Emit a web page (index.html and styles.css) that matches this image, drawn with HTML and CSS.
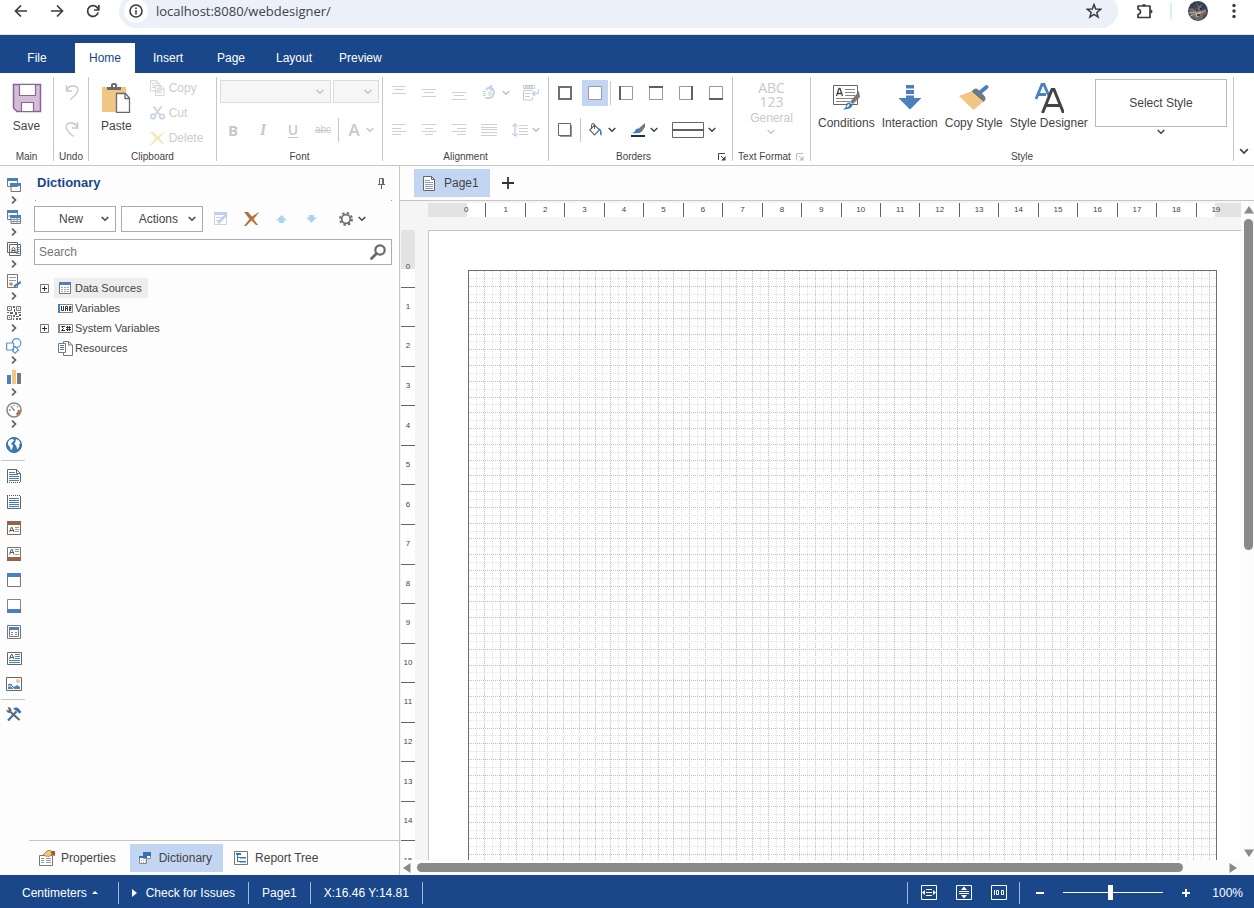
FILE: index.html
```html
<!DOCTYPE html>
<html lang="en">
<head>
<meta charset="utf-8">
<meta name="viewport" content="width=device-width, initial-scale=1">
<title>Report Designer</title>
<link rel="stylesheet" href="styles.css">
</head>
<body>
<svg class="defs" aria-hidden="true">
  <symbol id="down" viewBox="0 0 8 6"><path d="M.7 1 4 4.3 7.3 1" fill="none" stroke="currentColor" stroke-width="1.5"/></symbol>
  <symbol id="right" viewBox="0 0 6 8"><path d="M1 .7 4.5 4 1 7.3" fill="none" stroke="currentColor" stroke-width="1.6"/></symbol>
  <symbol id="launch" viewBox="0 0 8 8"><path d="M.5 7V.5H7M3 3l3 3" fill="none" stroke="currentColor"/><path d="M7.500 3v4.500H3z" fill="currentColor"/></symbol>
</svg>
<div class="app">
  <header class="browser">
    <div class="browser-row">
      <button class="nav-btn" aria-label="Back"><svg width="14" height="14" viewBox="0 0 14 14"><path d="M13 7H2M7 1.5 1.5 7 7 12.5" fill="none" stroke="currentColor" stroke-width="1.7"/></svg></button>
      <button class="nav-btn" aria-label="Forward"><svg width="14" height="14" viewBox="0 0 14 14"><path d="M1 7h11M7 1.5 12.5 7 7 12.5" fill="none" stroke="currentColor" stroke-width="1.7"/></svg></button>
      <button class="nav-btn" aria-label="Reload"><svg width="14" height="14" viewBox="0 0 14 14"><path d="M12.2 8.5A5.4 5.4 0 1 1 11.5 4L13 5.5M12.8 1v5H8" fill="none" stroke="currentColor" stroke-width="1.7"/></svg></button>
      <div class="address">
        <button class="site-info" aria-label="Site information"><svg width="14" height="14" viewBox="0 0 14 14"><circle cx="7" cy="7" r="6" fill="none" stroke="currentColor" stroke-width="1.6"/><path d="M7 6.200V10.5M7 3.500V5" stroke="currentColor" stroke-width="1.6"/></svg></button>
        <input class="url" aria-label="Address" value="localhost:8080/webdesigner/">
        <button class="star" aria-label="Bookmark"><svg width="16" height="16" viewBox="0 0 16 16"><path d="M8 1.500 9.700 6.100 14.600 6.300 10.800 9.400 12.100 14.100 8 11.400 3.900 14.100 5.200 9.400 1.400 6.300 6.300 6.100z" fill="none" stroke="currentColor" stroke-width="1.5"/></svg></button>
      </div>
      <button class="nav-btn" aria-label="Extensions"><svg width="18" height="18" viewBox="0 0 18 18"><path d="M3 4H15V15.500H3V12.500Q5.500 12 5.500 9.800T3 7z" fill="none" stroke="currentColor" stroke-width="1.7" stroke-linejoin="round"/><path d="M7 4a2 2 0 0 1 4 0zM15.500 7.500a2 2 0 0 1 0 4z" fill="currentColor"/></svg></button>
      <i class="cyan-sep"></i>
      <button class="nav-btn" aria-label="Profile"><svg width="20" height="20" viewBox="0 0 20 20"><circle cx="10" cy="10" r="10" fill="#3a4150"/><path d="M1 8 6 6 7 1 11 5 15 3 15 8 19 11 15 18 9 19.500 3 16z" fill="#6e6a6a"/><path d="M3 3 7 8M6 1 9 7M16 3 13 9" stroke="#2f3a55" stroke-width="2"/><path d="M1 12 7 11M2 15 7 13M18 9l-5 3" stroke="#b9b3ae"/><path d="M7 10 9 12 13 10 12 15 8 16z" fill="#c9b2a4"/><path d="M8 9h1.500M12 8h1.500M9 14h3" stroke="#221f24" stroke-width="1.5"/><path d="M15 13l3 1-3 4z" fill="#8a3a30"/></svg></button>
      <button class="nav-btn" aria-label="Menu"><svg width="4" height="16" viewBox="0 0 4 16" fill="currentColor"><circle cx="2" cy="2.5" r="1.7"/><circle cx="2" cy="8" r="1.7"/><circle cx="2" cy="13.5" r="1.7"/></svg></button>
    </div>
  </header>

  <nav class="tabs">
    <button class="tab file">File</button>
    <button class="tab active">Home</button>
    <button class="tab">Insert</button>
    <button class="tab">Page</button>
    <button class="tab">Layout</button>
    <button class="tab">Preview</button>
  </nav>

  <section class="ribbon">
    <div class="group g-main">
      <div class="tools">
        <button class="big"><svg width="30" height="30" viewBox="0 0 30 30"><path d="M1.500 1.500h27v27H5L1.500 25z" fill="#d5bdd9" stroke="#8d6397" stroke-width="1.5"/><path d="M7.500 1.500h16v11h-16zM9.500 19.500h12v9h-12z" fill="#fff" stroke="#8d6397" stroke-width="1.2"/></svg>Save</button>
      </div>
      <div class="caption">Main</div>
    </div>
    <div class="group g-undo">
      <div class="tools col">
        <button class="cell off" aria-label="Undo"><svg width="14" height="18" viewBox="0 0 14 18"><path d="M1.500 1v6H7M1.500 7Q3 2 8 2T13 6Q13 9 5.500 15.500" fill="none" stroke="#444" stroke-width="1.3"/></svg></button>
        <button class="cell off" aria-label="Redo"><svg width="14" height="18" viewBox="0 0 14 18"><path d="M12.500 1v6H7M12.500 7Q11 2 6 2T1 6Q1 9 8.500 15.500" fill="none" stroke="#444" stroke-width="1.3"/></svg></button>
      </div>
      <div class="caption">Undo</div>
    </div>
    <div class="group g-clip">
      <div class="tools clip">
        <button class="big"><svg width="30" height="30" viewBox="0 0 30 30"><path d="M1 4h24v25H1z" fill="#f1c583"/><path d="M6 7V4h4V2q0-2 3-2t3 2v2h4v3z" fill="#6a6a6a"/><path d="M12 2h2v2h-2z" fill="#fff"/><path d="M15.500 10.500h9l4 4.500v14.500h-13z" fill="#fff" stroke="#6a6a6a" stroke-width="1.3"/><path d="M24 11v4.500h4" fill="none" stroke="#6a6a6a" stroke-width="1.3"/></svg>Paste</button>
        <div class="stack">
          <button class="small off"><svg width="15" height="16" viewBox="0 0 15 16"><path d="M1 .5h5.500L9 3v8H.5V.5zM5.500 5.500h5.500l3 3v7H5.500z" fill="#fff" stroke="#777"/><path d="M6 .5V3.500h3M10.500 5.500V9h3.500" fill="none" stroke="#777"/><path d="M2 3.500h3M2 5.500h3M2 7.500h3M7 8.500h2M7 10.500h5M7 12.500h5" stroke="#3f78c8"/></svg>Copy</button>
          <button class="small off"><svg width="15" height="14" viewBox="0 0 15 14"><path d="M3.500 .5 10 9M11.500 .5 5 9" stroke="#777" stroke-width="2"/><circle cx="3" cy="10.5" r="2.200" fill="none" stroke="#2f68c0" stroke-width="1.5"/><circle cx="12" cy="10.5" r="2.200" fill="none" stroke="#2f68c0" stroke-width="1.5"/></svg>Cut</button>
          <button class="small off"><svg width="15" height="14" viewBox="0 0 15 14"><path d="M0 1h4l4 4.500L14 .5h1L9.500 7l4.500 6h-2L7.500 8.500 2 14H0l5.500-7z" fill="#e9b31e"/></svg>Delete</button>
        </div>
      </div>
      <div class="caption">Clipboard</div>
    </div>
    <div class="group g-font">
      <div class="tools col">
        <div class="line top">
          <span class="pick wide"><select disabled aria-label="Font"><option></option></select><svg width="8" height="6"><use href="#down"/></svg></span>
          <span class="pick"><select disabled aria-label="Font size"><option></option></select><svg width="8" height="6"><use href="#down"/></svg></span>
        </div>
        <div class="line">
          <button class="cell fmt bold" disabled>B</button>
          <button class="cell fmt italic" disabled>I</button>
          <button class="cell fmt under" disabled>U</button>
          <button class="cell fmt strike" disabled>abc</button>
          <i class="vsep"></i>
          <button class="split fmt color" disabled><span class="ico">A</span><svg width="8" height="6"><use href="#down"/></svg></button>
        </div>
      </div>
      <div class="caption">Font</div>
    </div>
    <div class="group g-align">
      <div class="tools col">
        <div class="line">
          <button class="cell off" aria-label="Top"><svg width="14" height="14" viewBox="0 0 14 14" stroke="#666"><path d="M0 .5h14M2 3.500h10M0 7.500h14"/></svg></button>
          <button class="cell off" aria-label="Middle"><svg width="14" height="14" viewBox="0 0 14 14" stroke="#666"><path d="M0 3.500h14M2 6.500h10M0 10.500h14"/></svg></button>
          <button class="cell off" aria-label="Bottom"><svg width="14" height="14" viewBox="0 0 14 14" stroke="#666"><path d="M0 6.500h14M2 9.500h10M0 13.500h14"/></svg></button>
          <button class="split off" aria-label="Rotate"><span class="ico"><svg width="14" height="16" viewBox="0 0 14 16"><path d="M3 4.500Q5 2.500 8 2.500A5.500 5.500 0 1 1 2.500 12.500M9 0 6.500 2.500 9 5.500" fill="none" stroke="#2f68c0" stroke-width="1.800"/><path d="M0 6.500h3M0 8.500h3M0 10.500h3" stroke="#2f68c0"/><circle cx="7" cy="8.500" r="2.500" fill="#7cc08c"/></svg></span><svg width="8" height="6"><use href="#down"/></svg></button>
          <button class="cell off" aria-label="Word wrap"><svg width="16" height="16" viewBox="0 0 16 16"><path d="M.5 .5h11v3H.5zM.5 5.500h9M.5 8v7h9v-3M2 8.500h5M2 11.500h5M.5 5.500v3" fill="none" stroke="#555"/><path d="M15.500 4v3.500q0 1-2 1H10M12 6 9.500 8.500 12 11M2 2h8" fill="none" stroke="#2f68c0" stroke-width="1.3"/></svg></button>
        </div>
        <div class="line">
          <button class="cell off" aria-label="Align left"><svg width="14" height="12" viewBox="0 0 14 12" stroke="#666"><path d="M0 .5h14M0 4.500h9M0 7.500h14M0 10.500h9"/></svg></button>
          <button class="cell off" aria-label="Align center"><svg width="14" height="12" viewBox="0 0 14 12" stroke="#666"><path d="M0 .5h14M3 4.500h8M0 7.500h14M3 10.500h8"/></svg></button>
          <button class="cell off" aria-label="Align right"><svg width="14" height="12" viewBox="0 0 14 12" stroke="#666"><path d="M0 .5h14M5 4.500h9M0 7.500h14M5 10.500h9"/></svg></button>
          <button class="cell off" aria-label="Justify"><svg width="16" height="12" viewBox="0 0 16 12" stroke="#666"><path d="M0 .5h16M0 3.500h16M0 5.500h16M0 8.500h16M0 11.500h16"/></svg></button>
          <button class="split off" aria-label="Line spacing"><span class="ico"><svg width="16" height="14" viewBox="0 0 16 14"><path d="M3 1v12M.5 3.500 3 1l2.500 2.500M.5 10.500 3 13l2.500-2.500" fill="none" stroke="#2f68c0" stroke-width="1.3"/><path d="M7 2.500h9M7 5.500h9M7 8.500h9M7 11.500h9" stroke="#666"/></svg></span><svg width="8" height="6"><use href="#down"/></svg></button>
        </div>
      </div>
      <div class="caption">Alignment</div>
    </div>
    <div class="group g-borders">
      <div class="tools col">
        <div class="line">
          <button class="cell" aria-label="All borders"><svg width="14" height="14" viewBox="0 0 14 14"><path d="M1 1h12v12H1z" fill="none" stroke="#707070" stroke-width="2"/></svg></button>
          <button class="cell chosen" aria-label="No borders"><svg width="14" height="14" viewBox="0 0 14 14"><path d="M.5 .5h13v13H.5z" fill="#fff" stroke="#9a9a9a"/></svg></button>
          <i class="vsep"></i>
          <button class="cell" aria-label="Left border"><svg width="14" height="14" viewBox="0 0 14 14"><path d="M.5 .5h13v13H.5z" fill="none" stroke="#9a9a9a"/><path d="M1 0v14" stroke="#606060" stroke-width="2"/></svg></button>
          <button class="cell" aria-label="Top border"><svg width="14" height="14" viewBox="0 0 14 14"><path d="M.5 .5h13v13H.5z" fill="none" stroke="#9a9a9a"/><path d="M0 1h14" stroke="#606060" stroke-width="2"/></svg></button>
          <button class="cell" aria-label="Right border"><svg width="14" height="14" viewBox="0 0 14 14"><path d="M.5 .5h13v13H.5z" fill="none" stroke="#9a9a9a"/><path d="M13 0v14" stroke="#606060" stroke-width="2"/></svg></button>
          <button class="cell" aria-label="Bottom border"><svg width="14" height="14" viewBox="0 0 14 14"><path d="M.5 .5h13v13H.5z" fill="none" stroke="#9a9a9a"/><path d="M0 13h14" stroke="#606060" stroke-width="2"/></svg></button>
        </div>
        <div class="line">
          <button class="cell" aria-label="Shadow"><svg width="14" height="14" viewBox="0 0 14 14"><path d="M2 2h12v12H2z" fill="#999"/><path d="M.5 .5h12v12H.5z" fill="#fff" stroke="#666"/></svg></button>
          <i class="vsep"></i>
          <button class="split" aria-label="Background"><span class="ico"><svg width="14" height="14" viewBox="0 0 14 14"><path d="M5.500 2 10.500 7 5.500 12 .8 7z" fill="#fff" stroke="#666" stroke-width="1.2"/><path d="M2.500 6V2.500Q2.500 .5 4 .5T5.500 2.500V6" fill="none" stroke="#555"/><path d="M10 5Q13.500 7 12.500 12.500 10.800 13 11 9z" fill="#3d7cc0"/></svg></span><svg width="8" height="6"><use href="#down"/></svg></button>
          <button class="split pen" aria-label="Border color"><span class="ico"><svg width="16" height="14" viewBox="0 0 16 14"><path d="M15 0v4L11.500 9 8 6z" fill="#777"/><path d="M8 5.500 11.500 9Q9 11 1 10 5 9.500 5.500 7 6.500 5 8 5.500z" fill="#3d7cc0"/><path d="M1 12h14v2H1z" fill="#1f2f4f"/></svg></span><svg width="8" height="6"><use href="#down"/></svg></button>
          <button class="split pen line-style" aria-label="Border style"><span class="ico wide"><svg width="32" height="16" viewBox="0 0 32 16"><path d="M.5 .5h31v15H.5z" fill="#fff" stroke="#666"/><path d="M0 8h32" stroke="#606060" stroke-width="2"/></svg></span><svg width="8" height="6"><use href="#down"/></svg></button>
        </div>
      </div>
      <div class="caption launch"><span>Borders</span><button aria-label="Border settings"><svg width="8" height="8"><use href="#launch"/></svg></button></div>
    </div>
    <div class="group g-format">
      <div class="tools">
        <button class="format" disabled><span class="abc">ABC<br>123</span>General<svg width="8" height="6"><use href="#down"/></svg></button>
      </div>
      <div class="caption launch"><span>Text Format</span><button aria-label="Text format settings" disabled><svg width="8" height="8"><use href="#launch"/></svg></button></div>
    </div>
    <div class="group g-style">
      <div class="tools styles">
        <button class="big tight"><svg width="28" height="28" viewBox="0 0 28 28"><path d="M1.500 2.500h24v19H1.500z" fill="#fff" stroke="#666"/><path d="M4.500 13 7 5.500h1L10.500 13M5.500 10.500h4" fill="none" stroke="#444" stroke-width="1.3"/><path d="M13 6.500h10M13 9.500h10M13 12.500h10M4 15.500h19M4 18.500h14" stroke="#888"/><path d="M27 8 28 14 21 21l-3-2z" fill="#777"/><path d="M17.500 19.500 20.500 22Q20 26.500 10 26.500 14 25.500 14 22.500T17.500 19.500z" fill="#3d7cc0"/><path d="M15 24l2-2.500" stroke="#fff" stroke-width="1.5"/></svg>Conditions</button>
        <button class="big tight"><svg width="28" height="28" viewBox="0 0 28 28"><path d="M10 2h8v3.500h-8zM10 7h8v4h-8zM10 12.500h8V15h7.500L14 26.500 2.500 15H10z" fill="#4a80bd"/></svg>Interaction</button>
        <button class="big tight"><svg width="30" height="28" viewBox="0 0 30 28"><path d="M0 13 12 8.500 24 19 14.500 27z" fill="#f1c583"/><path d="M12.500 8.500Q16 4 19 6.500L25.500 13Q28 16 24.500 19z" fill="#777"/><path d="M21 9.500 27.500 4" stroke="#4a80bd" stroke-width="4" stroke-linecap="round"/></svg>Copy Style</button>
        <button class="big tight"><svg width="30" height="30" viewBox="0 0 30 30"><path d="M2 16 8 1.500h2L15 13M4 11.500h8" fill="none" stroke="#4a80bd" stroke-width="2.8"/><path d="M8.500 30 18 6.500h2L29.500 30M12 22.500h14" fill="none" stroke="#444" stroke-width="3"/></svg>Style Designer</button>
        <button class="style-pick"><span>Select Style</span><svg width="8" height="6"><use href="#down"/></svg></button>
      </div>
      <div class="caption">Style</div>
    </div>
    <button class="fold" aria-label="Collapse ribbon"><svg width="10" height="7"><use href="#down"/></svg></button>
  </section>

  <main class="work">
    <nav class="toolbox">
      <button class="tool more" aria-label="Bands"><svg width="14" height="14" viewBox="0 0 14 14"><path d="M.5 .5h10v8H.5zM4 5.500h9.500v8H4z" fill="#fff" stroke="#777"/><path d="M0 0h11v3H0zM3 5h11v3H3z" fill="#4a80bd"/></svg><svg class="arr" width="6" height="8"><use href="#right"/></svg></button>
      <button class="tool more" aria-label="Cross bands"><svg width="14" height="14" viewBox="0 0 14 14"><path d="M.5 .5h10v9H.5zM4 5.500h9.500v8H4z" fill="#fff" stroke="#777"/><path d="M1 6h3M4 9.500h9M4 11.500h9M7 8v6M10 8v6" stroke="#8a9ab0"/><path d="M0 0h11v3H0zM3 5h11v3H3z" fill="#4a80bd"/></svg><svg class="arr" width="6" height="8"><use href="#right"/></svg></button>
      <button class="tool more" aria-label="Components"><svg width="14" height="14" viewBox="0 0 14 14"><path d="M.5 .5h10v10H.5zM2.500 2.500h11v11h-11z" fill="#fff" stroke="#666"/><path d="M5 11V7.500Q5 5.500 6.500 5.500T8 7.500V11M5 8.500h3" fill="none" stroke="#555"/><path d="M9.500 5.500h3M9.500 7.500h3M9.500 9.500h3M9.500 11.500h3" stroke="#4a80bd"/></svg><svg class="arr" width="6" height="8"><use href="#right"/></svg></button>
      <button class="tool more" aria-label="Signatures"><svg width="14" height="14" viewBox="0 0 14 14"><path d="M.5 .5h10v13H.5z" fill="#fff" stroke="#777"/><path d="M2 3.500h7M2 6.500h7" stroke="#999"/><circle cx="4" cy="10" r="1.800" fill="#d58a4a"/><path d="M7 12.500 14 8" stroke="#4a80bd" stroke-width="2.200"/></svg><svg class="arr" width="6" height="8"><use href="#right"/></svg></button>
      <button class="tool more" aria-label="Barcodes"><svg width="14" height="14" viewBox="0 0 14 14"><path d="M.5 .5h4v4h-4zM9.500 .5h4v4h-4zM.5 9.500h4v4h-4z" fill="none" stroke="#777"/><path d="M2 2h1v1H2zM11 2h1v1h-1zM2 11h1v1H2zM6 0h2v2H6zM7 3h1v3H7zM0 6h2v1H0zM3 6h3v2H3zM8 6h2v3H8zM11 6h3v1h-3zM6 9h2v2H6zM9 10h3v1H9zM12 8h2v2h-2zM6 12h1v2H6zM9 12h2v2H9zM12 12h2v2h-2z" fill="#666"/></svg><svg class="arr" width="6" height="8"><use href="#right"/></svg></button>
      <button class="tool more" aria-label="Shapes"><svg width="16" height="16" viewBox="0 0 16 16" fill="#fff" stroke="#5c97d0" stroke-width="1.2"><circle cx="10.5" cy="5" r="4.300"/><path d="M.6 5h7v7h-7zM9 8.500 12.500 12 9 15.200 5.800 12z"/></svg><svg class="arr" width="6" height="8"><use href="#right"/></svg></button>
      <button class="tool more" aria-label="Charts"><svg width="14" height="14" viewBox="0 0 14 14"><path d="M0 5h4v9H0z" fill="#4a80bd"/><path d="M5 0h4v14H5z" fill="#f1c583"/><path d="M10 3h4v11h-4z" fill="#777"/></svg><svg class="arr" width="6" height="8"><use href="#right"/></svg></button>
      <button class="tool more" aria-label="Gauges"><svg width="16" height="16" viewBox="0 0 16 16"><circle cx="8" cy="8" r="7" fill="#fff" stroke="#888" stroke-width="1.600"/><path d="M13 8A5 5 0 0 1 10.500 12.500" fill="none" stroke="#b0623a" stroke-width="2"/><path d="M5 4 8.500 9M3 8h1.500M8 3v1M11 4.500 12 5" stroke="#777" stroke-width="1.300"/></svg><svg class="arr" width="6" height="8"><use href="#right"/></svg></button>
      <button class="tool globe" aria-label="Map"><svg width="16" height="16" viewBox="0 0 16 16"><circle cx="8" cy="8" r="7.500" fill="#3a7ab8" stroke="#2d6ca8"/><path d="M2 5 4 2.500 7 2 8 3.500 6.500 5 5 7 7 8.500 6.500 11 5 13.500 4 10 2 8zM10 2l3 1.500 1.500 3L13 7l.5 2-2 3.500-1.500-4L8.500 7l1-2.500z" fill="#fff"/></svg></button>
      <hr>
      <button class="tool" aria-label="Report title"><svg width="14" height="14" viewBox="0 0 14 14"><path d="M.5 13V.5h9l4 4V13" fill="#fff" stroke="#666"/><path d="M9.500 0v4.500H13" fill="none" stroke="#666"/><path d="M0 13.500h14" stroke="#555" stroke-dasharray="1 1"/><path d="M2 3.500h6M2 5.500h9M2 7.500h10M2 9.500h10M2 11.500h10" stroke="#4a80bd"/></svg></button>
      <button class="tool" aria-label="Report summary"><svg width="14" height="14" viewBox="0 0 14 14"><path d="M.5 1v12.500h13V1" fill="#fff" stroke="#666"/><path d="M0 .5h14" stroke="#555" stroke-dasharray="1 1"/><path d="M2 3.500h10M2 5.500h10M2 7.500h10M2 9.500h10M2 11.500h10" stroke="#3f78c0"/></svg></button>
      <button class="tool" aria-label="Page header"><svg width="14" height="14" viewBox="0 0 14 14"><path d="M.5 .5h13v13H.5z" fill="#fff" stroke="#96624a"/><path d="M0 0h14v4H0z" fill="#96624a"/><path d="M2.500 11 4.300 6.500h.9L7 11M3 9.500h3.500" fill="none" stroke="#555"/><path d="M8 6.500h4M8 8.500h4M8 10.500h4" stroke="#999"/></svg></button>
      <button class="tool" aria-label="Page footer"><svg width="14" height="14" viewBox="0 0 14 14"><path d="M.5 .5h13v13H.5z" fill="#fff" stroke="#777"/><path d="M0 10h14v4H0z" fill="#96624a"/><path d="M2.500 7.500 4.300 2.500h.9L7 7.500M3 5.500h3.500" fill="none" stroke="#555"/><path d="M8 2.500h4M8 4.500h4M8 7.500h4" stroke="#999"/></svg></button>
      <button class="tool" aria-label="Header band"><svg width="14" height="14" viewBox="0 0 14 14"><path d="M.5 .5h13v13H.5z" fill="#fff" stroke="#777"/><path d="M0 0h14v4H0z" fill="#4a80bd"/></svg></button>
      <button class="tool" aria-label="Footer band"><svg width="14" height="14" viewBox="0 0 14 14"><path d="M.5 .5h13v13H.5z" fill="#fff" stroke="#888"/><path d="M0 10h14v4H0z" fill="#4a80bd"/></svg></button>
      <button class="tool" aria-label="Data band"><svg width="14" height="14" viewBox="0 0 14 14"><path d="M.5 .5h13v13H.5zM2.500 2.500h9v9h-9z" fill="#fff" stroke="#777"/><path d="M2 2h10v3H2z" fill="#4a80bd"/><path d="M4 7.500h2M8 7.500h2M4 9.500h2M8 9.500h2" stroke="#888"/></svg></button>
      <button class="tool" aria-label="Text"><svg width="15" height="13" viewBox="0 0 15 13"><path d="M.5 .5h14v12H.5z" fill="#fff" stroke="#666"/><path d="M2.500 7 4.300 2.500h.9L7 7M3 5.500h3.500" fill="none" stroke="#555"/><path d="M8 2.500h5M8 4.500h5M8 6.500h5M2 8.500h11M2 10.500h11" stroke="#4a80bd"/></svg></button>
      <button class="tool" aria-label="Image"><svg width="16" height="14" viewBox="0 0 16 14"><path d="M.5 .5h15v13H.5z" fill="#fff" stroke="#666"/><circle cx="12" cy="4" r="2" fill="#f1c583"/><path d="M2 12V7l3 0 3 3 3-2 3 2v2z" fill="#4a80bd"/><path d="M2 9l3 0 3 3" fill="none" stroke="#fff"/></svg></button>
      <hr class="last">
      <button class="tool" aria-label="Toolbox setup"><svg width="16" height="14" viewBox="0 0 16 14"><path d="M2 13.500 10.500 4.500" stroke="#3d72b0" stroke-width="2.200"/><path d="M7 1.500Q11-.5 13 2l2.500 3-2 1.500L11 4.500z" fill="#3d72b0"/><path d="M4 4.500 13.500 13" stroke="#666" stroke-width="2.200"/><path d="M0 2.500 2.500 4V1.500L1.500 0Q5 0 5.500 3L4.500 6Q1 6.500 0 2.500z" fill="#666"/></svg></button>
    </nav>

    <aside class="panel">
      <div class="panel-main">
        <div class="panel-head"><h1>Dictionary</h1><button aria-label="Pin panel"><svg width="7" height="11" viewBox="0 0 7 11"><path d="M1.500 6.500V.5h4v6M0 6.500h7M3.500 7v4M4.500 1v5" fill="none" stroke="#666"/></svg></button></div>
        <div class="dots"></div>
        <div class="panel-tools">
          <button class="drop">New<svg width="8" height="6"><use href="#down"/></svg></button>
          <button class="drop">Actions<svg width="8" height="6"><use href="#down"/></svg></button>
          <button class="cell first" aria-label="Edit"><svg class="faded" width="14" height="14" viewBox="0 0 14 14"><path d="M.5 .5h12v12H.5zM2 5.500h8M2 8.500h5" fill="none" stroke="#777"/><path d="M0 0h13v3H0z" fill="#3d72d0"/><path d="M4 11 13 2" stroke="#3d72d0" stroke-width="2.500"/></svg></button>
          <button class="cell" aria-label="Delete item"><svg width="15" height="14" viewBox="0 0 15 14"><path d="M0 0h4l4 4.500L14 .5h1L9.500 7l4.500 6h-2L7.500 8.500 2 14H0l5.500-7z" fill="#b5713f"/></svg></button>
          <button class="cell" aria-label="Move up"><svg width="11" height="8" viewBox="0 0 11 8"><path d="M5.500 0 11 5.500H8V8H3V5.500H0z" fill="#a9d4f2"/></svg></button>
          <button class="cell" aria-label="Move down"><svg width="11" height="8" viewBox="0 0 11 8"><path d="M5.500 8 11 2.500H8V0H3v2.500H0z" fill="#a9d4f2"/></svg></button>
          <button class="split gear" aria-label="Settings"><span class="ico"><svg width="14" height="14" viewBox="0 0 14 14"><circle cx="7" cy="7" r="6" fill="none" stroke="#707070" stroke-width="2" stroke-dasharray="2.360 2.360"/><circle cx="7" cy="7" r="4.300" fill="none" stroke="#707070" stroke-width="1.800"/></svg></span><svg width="8" height="6"><use href="#down"/></svg></button>
        </div>
        <div class="search"><input type="text" placeholder="Search" aria-label="Search"><button aria-label="Find"><svg width="16" height="16" viewBox="0 0 16 16"><circle cx="10" cy="6" r="4.700" fill="none" stroke="#6a6a6a" stroke-width="2.2"/><path d="M6.500 9.500 1.500 14.500" stroke="#6a6a6a" stroke-width="2.800" stroke-linecap="round"/></svg></button></div>
        <ul class="tree">
          <li><button class="plus" aria-label="Expand Data Sources"><svg width="9" height="9" viewBox="0 0 9 9"><path d="M.5 .5h8v8h-8z" fill="#fff" stroke="#777"/><path d="M2 4.500h5M4.500 2v5" stroke="#333"/></svg></button><button class="node selected"><svg width="12" height="12" viewBox="0 0 12 12"><path d="M.5 .5h11v11H.5z" fill="#fff" stroke="#777"/><path d="M0 0h12v3H0z" fill="#4a80bd"/><path d="M2 5.500h8M2 7.500h8M2 9.500h8" stroke="#9aa6b5" stroke-dasharray="2 1"/></svg>Data Sources</button></li>
          <li><span class="plus"></span><button class="node"><svg width="15" height="9" viewBox="0 0 15 9"><path d="M.5 .5h14v8H.5z" fill="#fff" stroke="#888"/><path d="M0 0h2v9H0z" fill="#4a80bd"/><path d="M3.500 2v4.500h2V2M7.500 7V2.500h2V7M7.500 4.500h2M11.500 7V2.500h1.500v2h-1.500L13 7" fill="none" stroke="#333"/></svg>Variables</button></li>
          <li><button class="plus" aria-label="Expand System Variables"><svg width="9" height="9" viewBox="0 0 9 9"><path d="M.5 .5h8v8h-8z" fill="#fff" stroke="#777"/><path d="M2 4.500h5M4.500 2v5" stroke="#333"/></svg></button><button class="node"><svg width="15" height="9" viewBox="0 0 15 9"><path d="M.5 .5h14v8H.5z" fill="#fff" stroke="#888"/><path d="M0 0h2v9H0z" fill="#888"/><path d="M7 2.500H3.500L5.500 4.500 3.500 6.500H7M9.500 2v5M11.500 2v5M8 3.500h5M8 5.500h5" fill="none" stroke="#333"/></svg>System Variables</button></li>
          <li><span class="plus"></span><button class="node"><svg width="15" height="15" viewBox="0 0 15 15"><path d="M5.500 .5h5l4 3.500v10.500h-9z" fill="#fff" stroke="#777"/><path d="M.5 2.500h7v9h-7z" fill="#fff" stroke="#777"/><path d="M10.500 .5V4H14" fill="none" stroke="#777"/><path d="M2 4.500h4M2 6.500h4M2 8.500h4" stroke="#4a80bd"/></svg>Resources</button></li>
        </ul>
      </div>
      <div class="panel-tabs">
        <button><svg width="16" height="16" viewBox="0 0 16 16"><path d="M.5 5.500h13v10H.5z" fill="#fff" stroke="#777"/><path d="M2 8.500h3M2 10.500h3M2 12.500h3M7 8.500h5M7 10.500h5M7 12.500h5" stroke="#999"/><path d="M4 5 8 1q3-1.500 5 .5L12.500 5 10 6.500 6.500 6z" fill="#f1c583" stroke="#a8703a" stroke-width=".8"/><path d="M12 1h4v5l-3-1z" fill="#9a5a3a"/></svg>Properties</button>
        <button class="on"><svg width="16" height="12" viewBox="0 0 16 12"><path d="M6.500 .5h7v6h-7zM2.500 4.500h7v7h-7z" fill="#fff" stroke="#8a8a8a"/><path d="M6 0h8v4H6zM2 4h8v2H2z" fill="#3a70b5"/><path d="M4 8.500h5M4 10.500h5" stroke="#aaa" stroke-dasharray="1 1"/></svg>Dictionary</button>
        <button><svg width="16" height="14" viewBox="0 0 16 14"><path d="M1.500 .5h13v13h-13z" fill="#fff" stroke="#777"/><path d="M3 2h5v2H3zM7 6h6v1.500H7zM7 10h6v1.500H7z" fill="#3a78b5"/><path d="M4.500 4v7M4.500 6.500H7M4.500 10.500H7" fill="none" stroke="#3a78b5"/></svg>Report Tree</button>
      </div>
    </aside>

    <section class="designer">
      <div class="pages">
        <button class="page-tab"><svg width="12" height="15" viewBox="0 0 12 15"><path d="M.5 .5h8l3 3v11H.5z" fill="#fff" stroke="#666"/><path d="M8.500 0v3.500H12" fill="none" stroke="#666"/><path d="M2 4.500h5M2 6.500h8M2 8.500h8M2 10.500h8M2 12.500h8" stroke="#8aa0b5"/></svg>Page1</button>
        <button class="add" aria-label="Add page"><svg width="12" height="12" viewBox="0 0 12 12"><path d="M6 0v12M0 6h12" stroke="#333" stroke-width="1.800"/></svg></button>
      </div>
      <div class="canvas">
        <div class="corner"></div>
        <div class="hbox"><div class="ruler-h" id="ruler-h"></div></div>
        <div class="vbox"><div class="ruler-v" id="ruler-v"></div></div>
        <div class="view"><div class="sheet"><div class="area"><svg id="grid" width="747" height="1078" shape-rendering="crispEdges" aria-hidden="true"></svg></div></div></div>
        <div class="vscroll"><svg width="10" height="8" viewBox="0 0 10 8"><path d="M5 0 10 7.500H0z" fill="#8a8a8a"/></svg><div class="track"><div class="thumb"></div></div><svg width="10" height="8" viewBox="0 0 10 8"><path d="M5 8 10 .5H0z" fill="#8a8a8a"/></svg></div>
        <div class="hscroll"><svg width="8" height="10" viewBox="0 0 8 10"><path d="M0 5 7.500 0v10z" fill="#8a8a8a"/></svg><div class="track"><div class="thumb"></div></div><svg width="8" height="10" viewBox="0 0 8 10"><path d="M8 5 .5 0v10z" fill="#8a8a8a"/></svg></div>
      </div>
    </section>
  </main>

  <footer class="status">
    <button class="units">Centimeters<svg width="6" height="3" viewBox="0 0 6 3"><path d="M3 0 6 3H0z" fill="#fff"/></svg></button>
    <button class="issues"><svg width="5" height="8" viewBox="0 0 5 8"><path d="M0 0 5 4 0 8z" fill="#fff"/></svg>Check for Issues</button>
    <span class="pg">Page1</span>
    <span class="xy">X:16.46 Y:14.81</span>
    <div class="zooms">
      <button aria-label="Page width"><svg width="16" height="15" viewBox="0 0 16 15"><path d="M.5 .5h15v14H.5z" fill="none" stroke="#fff"/><path d="M5 4.500h6M5 7.500h6M5 10.500h6" stroke="#fff"/><path d="M1 7.500 4 5v5zM15 7.500 12 5v5z" fill="#fff"/></svg></button>
      <button aria-label="One page"><svg width="16" height="15" viewBox="0 0 16 15"><path d="M.5 .5h15v14H.5z" fill="none" stroke="#fff"/><path d="M3 6.500h10M3 8.500h10" stroke="#fff"/><path d="M8 1.500 11 5H5zM8 13.500 11 10H5z" fill="#fff"/></svg></button>
      <button aria-label="Actual size"><svg width="16" height="15" viewBox="0 0 16 15"><path d="M.5 .5h15v14H.5z" fill="none" stroke="#fff"/><path d="M3.500 5v5M5.500 5.500h2v4h-2zM10.500 5.500h2v4h-2z" fill="none" stroke="#fff"/></svg></button>
    </div>
    <div class="slide">
      <button aria-label="Zoom out"><svg width="8" height="2" viewBox="0 0 8 2"><path d="M0 0h8v2H0z" fill="#fff"/></svg></button>
      <input type="range" min="0" max="100" value="47" aria-label="Zoom">
      <button aria-label="Zoom in"><svg width="8" height="8" viewBox="0 0 8 8"><path d="M3 0h2v3h3v2H5v3H3V5H0V3h3z" fill="#fff"/></svg></button>
    </div>
    <button class="percent">100%</button>
  </footer>
</div>
<script src="designer.js"></script>
</body>
</html>
```
FILE: styles.css
```css
* { box-sizing: border-box; }
body { margin: 0; font: 12px/16px "Liberation Sans", Arial, sans-serif; color: #444; background: #fff; }
button, input, select { font: inherit; color: inherit; border: 0; background: none; padding: 0; margin: 0; border-radius: 0; }
button { display: flex; align-items: center; justify-content: center; flex: none; white-space: nowrap; }
svg { display: block; flex: none; }
.defs { position: absolute; width: 0; height: 0; }
.app { height: 100vh; display: flex; flex-direction: column; overflow: hidden; }

/* Browser bar */
.browser { flex: none; padding-bottom: 6px; border-bottom: 1px solid #dedede; color: #3b3b42; }
.browser-row { display: flex; align-items: center; height: 34px; margin-top: -6px; padding: 0 2px 0 3px; }
.nav-btn { width: 36px; height: 34px; }
.address { flex: 1; display: flex; align-items: center; height: 34px; margin: 0 8px; padding: 0 12px 0 5px; border-radius: 17px; background: #ebf0f9; }
.site-info { width: 24px; height: 24px; border-radius: 12px; background: #fff; }
.url { flex: 1; margin-left: 8px; font: 13px/20px "Open Sans", "Noto Sans", sans-serif; color: #40414a; outline: 0; }
.star { width: 24px; height: 24px; }
.cyan-sep { width: 2px; height: 16px; margin: 0 8px; background: #cdf3fb; }

/* Main tabs */
.tabs { flex: none; display: flex; align-items: flex-end; gap: 3px; height: 38px; background: #19478a; }
.tab { min-width: 60px; height: 30px; padding: 0 12px; color: #fff; }
.tab.file { width: 72px; padding: 0 11px 0 13px; }
.tab.active { background: #fff; color: #19478a; }

/* Ribbon */
.ribbon { flex: none; display: flex; padding: 4px 0; border-bottom: 1px solid #c6c6c6; }
.group { flex: none; display: flex; flex-direction: column; height: 84px; border-right: 1px solid #c6c6c6; }
.g-main { width: 54px; }
.g-undo { width: 35px; }
.g-clip { width: 128px; }
.g-font, .g-align { width: 166px; }
.g-borders { width: 184px; }
.g-format { width: 78px; }
.g-style { flex: 1; min-width: 400px; }
.tools { flex: 1; display: flex; align-items: flex-start; justify-content: center; }
.tools.col { flex-direction: column; justify-content: flex-start; gap: 5px; padding-left: 1px; }
.caption { height: 8px; font-size: 10px; line-height: 8px; text-align: center; }
.caption.launch { display: flex; align-items: center; padding-right: 6px; }
.caption.launch span { flex: 1; }
.caption button:disabled { opacity: .35; }
.line { display: flex; align-items: center; height: 32px; }
.line.top { align-items: flex-start; gap: 2px; padding: 3px 0 0 2px; }
.cell { width: 30px; height: 26px; }
.col > .cell { height: 32px; align-self: center; }
.off { color: #ccc; }
.off svg { opacity: .3; }
.split.off { color: #333; }
.big { flex-direction: column; gap: 5px; margin-top: 6px; }
.big.tight { gap: 2px; height: 48px; justify-content: space-between; }
.clip { justify-content: flex-start; gap: 18px; padding-left: 12px; }
.stack { display: flex; flex-direction: column; gap: 4px; }
.small { height: 21px; gap: 4px; justify-content: flex-start; }
.pick { display: grid; width: 46px; height: 23px; align-items: center; color: #c0c0c0; }
.pick.wide { width: 111px; }
.pick select, .pick svg { grid-area: 1 / 1; }
.pick select { appearance: none; width: 100%; height: 100%; border: 1px solid #dcdcdc; background: #f6f6f6; opacity: 1; }
.pick svg { justify-self: end; margin-right: 7px; }
.fmt { color: #c8c8c8; }
.bold { font: bold 15px/16px "Open Sans", sans-serif; }
.italic { font: italic bold 16px/16px "Liberation Serif", serif; }
.under { font: 600 14px/16px "Open Sans", sans-serif; text-decoration: underline; text-underline-offset: 2px; }
.strike { font-size: 10px; text-decoration: line-through; }
.color { font: 600 17px/16px "Open Sans", sans-serif; }
.vsep { flex: none; width: 1px; height: 24px; background: #c6c6c6; }
.chosen { width: 26px; margin: 0 2px; background: #c2d5f2; }
.split { width: 40px; height: 26px; gap: 2px; }
.g-align .split { width: 42px; }
.ico { display: flex; justify-content: center; width: 20px; }
.ico.wide { width: 34px; }
.pen { margin-left: 2px; }
.line-style { width: 56px; gap: 3px; }
.format { flex-direction: column; margin-top: 4px; color: #c8c8c8; }
.format svg { margin-top: 3px; }
.abc { margin-bottom: 1px; font: 14px/14px "Open Sans", sans-serif; }
.styles { justify-content: flex-start; gap: 7px; padding: 0 6px 0 7px; }
.style-pick { flex: 1; flex-direction: column; align-items: stretch; gap: 2px; margin-top: 2px; }
.style-pick span { border: 1px solid #b9b9b9; line-height: 46px; }
.style-pick svg { align-self: center; }
.fold { width: 20px; align-self: flex-end; height: 20px; }

/* Work area */
.work { flex: 1; min-height: 0; display: flex; background: #fdfdfd; }
.toolbox { flex: none; width: 29px; padding-top: 11px; overflow: hidden; }
.toolbox hr { width: 24px; height: 1px; margin: 3px 0 2px 1px; border: 0; background: #c6c6c6; }
.toolbox .last { margin: 2px 0 1px 1px; }
.tool { width: 28px; height: 26px; }
.tool.more { flex-direction: column; height: 32px; justify-content: space-between; padding: 1px 0 5px; }
.tool.globe { height: 24px; }
.arr { color: #5a5a5a; }

/* Dictionary panel */
.panel { flex: none; width: 371px; display: flex; flex-direction: column; border-right: 1px solid #c6c6c6; }
.panel-main { flex: 1; padding: 0 7px 0 5px; }
.panel-head { display: flex; align-items: center; justify-content: space-between; height: 34px; padding: 0 7px 0 3px; }
.panel-head h1 { margin: 0; font-size: 13px; line-height: 16px; color: #19478a; }
.dots { display: flex; justify-content: space-between; height: 1px; margin: 0 0 5px 1px; }
.dots::before, .dots::after { content: ""; width: 1px; background: #999; }
.panel-tools { display: flex; align-items: center; }
.drop { width: 82px; height: 26px; justify-content: flex-end; gap: 18px; margin-right: 5px; padding-right: 6px; border: 1px solid #ababab; background: #fff; }
.drop + .drop { gap: 10px; }
.first { margin-left: -2px; }
.faded { opacity: .32; }
.gear { margin-left: 5px; }
.search { display: flex; height: 26px; margin-top: 7px; border: 1px solid #ababab; background: #fff; }
.search input { flex: 1; min-width: 0; padding: 0 4px; outline: 0; }
.search input::placeholder { color: #757575; opacity: 1; }
.search button { width: 27px; }
.tree { list-style: none; margin: 13px 0 0; padding: 0; font-size: 11px; }
.tree li { display: flex; align-items: center; height: 20px; }
.plus { width: 20px; height: 20px; }
.node { height: 20px; padding: 0 6px 0 3px; gap: 2px; }
.node.selected { padding-left: 5px; gap: 4px; background: #ededed; }
.node svg { margin-left: 1px; }
.node.selected svg { margin-left: 0; }
.panel-tabs { flex: none; display: flex; gap: 3px; padding: 3px; border-top: 1px solid #c6c6c6; }
.panel-tabs button { height: 28px; gap: 6px; padding: 0 11px 0 7px; }
.panel-tabs .on { background: #c2d5f2; }

/* Page designer */
.designer { flex: 1; min-width: 0; display: flex; flex-direction: column; }
.pages { flex: none; display: flex; align-items: center; gap: 12px; height: 35px; padding: 0 14px; border-bottom: 1px solid #c6c6c6; }
.page-tab { height: 28px; gap: 9px; padding: 0 11px 0 9px; background: #c2d5f2; }
.canvas { flex: 1; min-height: 0; display: grid; grid-template: 29px minmax(0, 1fr) 15px / 28px minmax(0, 1fr) 13px; background: #f5f5f5; }
.hbox, .vbox, .view { overflow: hidden; }
.ruler-h { display: flex; width: 828px; height: 14px; margin-top: 2px; padding: 0 21px 0 19px; background: linear-gradient(to right, #e3e3e3 39px, #fff 39px 787px, #e3e3e3 787px); }
.ruler-v { display: flex; flex-direction: column; width: 14px; margin-left: 1px; padding-top: 18px; background: linear-gradient(to bottom, #e3e3e3 39px, #fff 39px); }
.ruler-h span, .ruler-v span { flex: 1; display: flex; align-items: center; justify-content: center; font-size: 8px; line-height: 8px; }
.ruler-h span + span { border-left: 1px solid #6a6266; }
.ruler-v span + span { border-top: 1px solid #6a6266; }
.sheet { width: 829px; padding: 39px; border: 1px solid #c6c6c6; background: #fff; }
.area { border: 1px solid #6e6e6e; }
.vscroll { grid-row: 1 / 3; grid-column: 3; display: flex; flex-direction: column; align-items: center; gap: 5px; padding: 5px 0 3px 2px; background: #fcfcfc; }
.hscroll { grid-column: 1 / 4; display: flex; align-items: center; gap: 6px; padding: 0 17px 0 3px; background: #fcfcfc; }
.track { flex: 1; }
.thumb { border-radius: 5px; background: #8a8a8a; }
.vscroll .thumb { width: 9px; height: 53%; }
.hscroll .thumb { height: 9px; width: 95%; }

/* Status bar */
.status { flex: none; display: flex; align-items: center; height: 33px; padding-top: 2px; color: #fff; background: #19478a; }
.status > * { height: 22px; display: flex; align-items: center; white-space: nowrap; }
.units { gap: 5px; padding: 0 20px 0 22px; }
.issues { gap: 9px; padding: 0 13px; }
.pg { padding: 0 13px; }
.xy { padding: 0 13px; }
.issues, .pg, .xy { border-left: 1px solid #a7b8d2; }
.xy { border-right: 1px solid #a7b8d2; }
.zooms { gap: 19px; margin-left: auto; padding: 0 12px 0 13px; border: solid #a7b8d2; border-width: 0 1px; }
.slide { gap: 19px; padding: 0 22px 0 16px; }
.slide input { appearance: none; width: 100px; height: 16px; background: linear-gradient(#fff, #fff) center / 100% 1px no-repeat; outline: 0; }
.slide input::-webkit-slider-thumb { appearance: none; width: 5px; height: 15px; background: #fff; }
.percent { padding-right: 11px; }
```
FILE: designer.js
```js
// Centimeter rulers
function ruler(id, count) {
  var box = document.getElementById(id);
  for (var i = 0; i < count; i++) {
    var mark = document.createElement('span');
    mark.textContent = i;
    box.appendChild(mark);
  }
  return box;
}
ruler('ruler-h', 20);

// The vertical ruler shows only the marks that reach the visible part of the sheet
var visible = document.querySelector('.vbox').clientHeight - 18;
var marks = Math.min(30, Math.ceil(visible / 39.5));
ruler('ruler-v', marks).style.height = 18 + marks * 39.5 + 'px';

// Dotted grid, five lines per centimeter; every second line is darker
var grid = document.getElementById('grid');
var step = 39.4 / 5;
function gridLine(x1, y1, x2, y2, strong) {
  var line = document.createElementNS('http://www.w3.org/2000/svg', 'line');
  line.setAttribute('x1', x1);
  line.setAttribute('y1', y1);
  line.setAttribute('x2', x2);
  line.setAttribute('y2', y2);
  line.setAttribute('stroke', strong ? '#c0c0c0' : '#e2e2e2');
  line.setAttribute('stroke-dasharray', '1 1');
  grid.appendChild(line);
}
for (var i = 1; i * step < 1078; i++) {
  var p = Math.floor(i * step) + 0.5;
  if (p < 745) gridLine(p, 0, p, 1078, i % 2 === 0);
  gridLine(0, p, 747, p, i % 2 === 0);
}
```
